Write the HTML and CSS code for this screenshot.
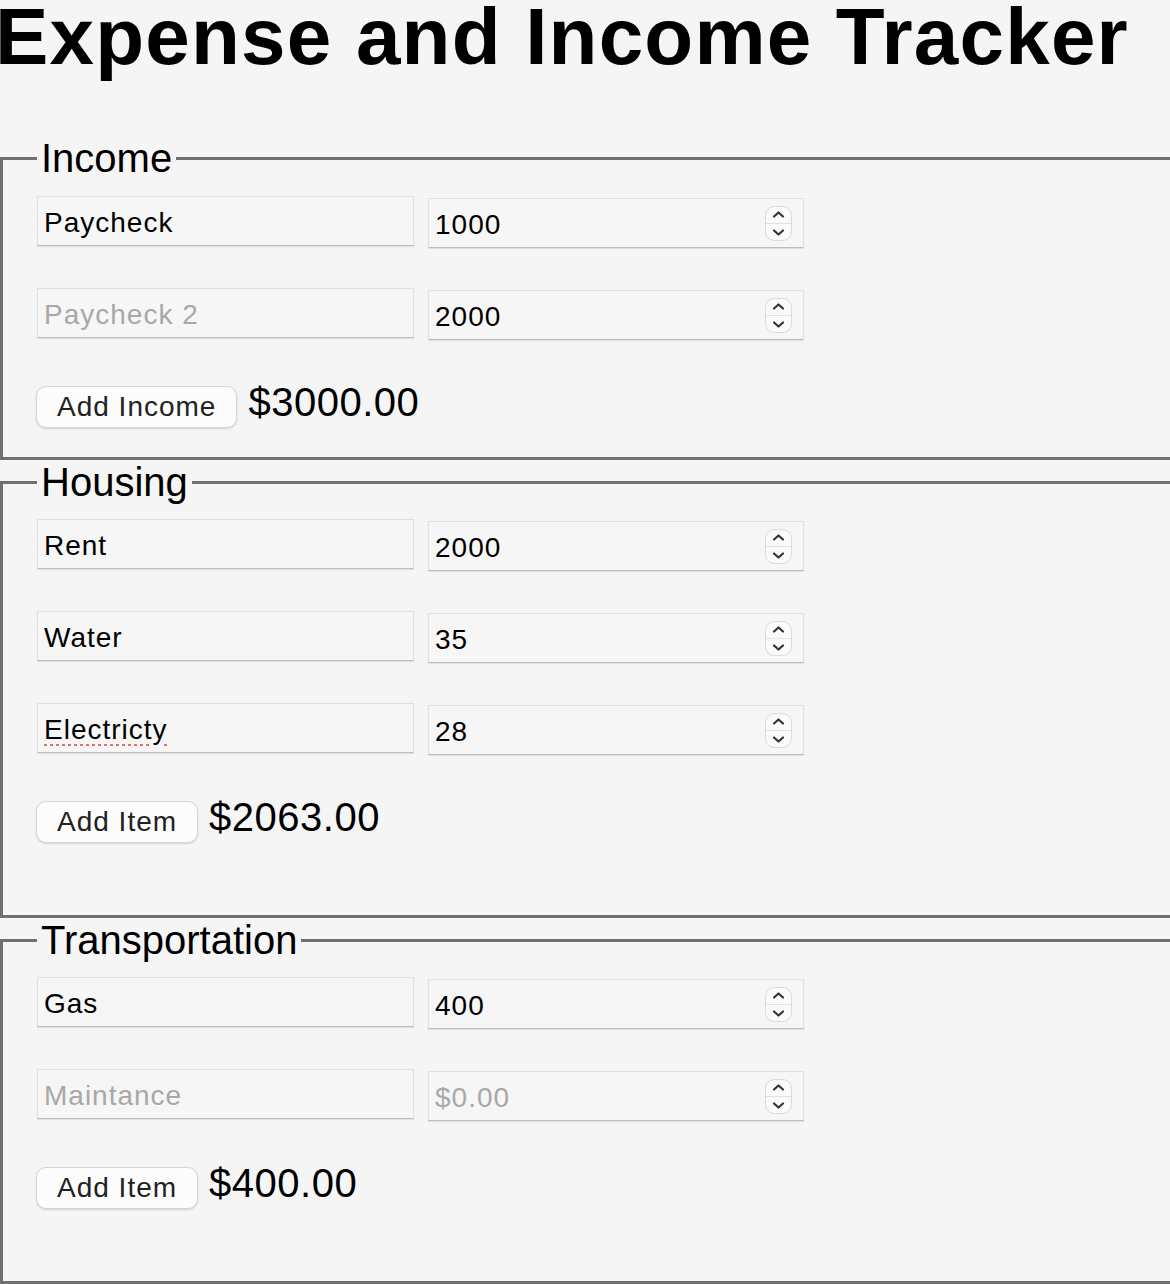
FILE: index.html
```html
<!DOCTYPE html>
<html lang="en">
<head>
    <meta charset="UTF-8">
    <title>Expense and Income Tracker</title>
    <link rel="stylesheet" href="styles.css">
</head>
<body>
    <h1>Expense and Income Tracker</h1>

    <fieldset class="section">
        <legend>Income</legend>
        <div class="row">
            <input type="text" class="name-input" value="Paycheck">
            <div class="num-field"><input type="text" class="num-input" value="1000"><svg class="spinner" width="27" height="35" viewBox="0 0 27 35"><rect x="0.5" y="0.5" width="26" height="34" rx="9" fill="#fafafa" stroke="#dadada"/><line x1="1" y1="17.5" x2="26" y2="17.5" stroke="#e2e2e2"/><path d="M9 10.5 L13.5 6.5 L18 10.5" fill="none" stroke="#333" stroke-width="2.2" stroke-linecap="round" stroke-linejoin="round"/><path d="M9 24.5 L13.5 28.5 L18 24.5" fill="none" stroke="#333" stroke-width="2.2" stroke-linecap="round" stroke-linejoin="round"/></svg></div>
        </div>
        <div class="row">
            <input type="text" class="name-input" placeholder="Paycheck 2">
            <div class="num-field"><input type="text" class="num-input" value="2000"><svg class="spinner" width="27" height="35" viewBox="0 0 27 35"><rect x="0.5" y="0.5" width="26" height="34" rx="9" fill="#fafafa" stroke="#dadada"/><line x1="1" y1="17.5" x2="26" y2="17.5" stroke="#e2e2e2"/><path d="M9 10.5 L13.5 6.5 L18 10.5" fill="none" stroke="#333" stroke-width="2.2" stroke-linecap="round" stroke-linejoin="round"/><path d="M9 24.5 L13.5 28.5 L18 24.5" fill="none" stroke="#333" stroke-width="2.2" stroke-linecap="round" stroke-linejoin="round"/></svg></div>
        </div>
        <div class="actions">
            <button class="add-btn">Add Income</button>
            <span class="total">$3000.00</span>
        </div>
    </fieldset>

    <fieldset class="section expense">
        <legend>Housing</legend>
        <div class="row">
            <input type="text" class="name-input" value="Rent">
            <div class="num-field"><input type="text" class="num-input" value="2000"><svg class="spinner" width="27" height="35" viewBox="0 0 27 35"><rect x="0.5" y="0.5" width="26" height="34" rx="9" fill="#fafafa" stroke="#dadada"/><line x1="1" y1="17.5" x2="26" y2="17.5" stroke="#e2e2e2"/><path d="M9 10.5 L13.5 6.5 L18 10.5" fill="none" stroke="#333" stroke-width="2.2" stroke-linecap="round" stroke-linejoin="round"/><path d="M9 24.5 L13.5 28.5 L18 24.5" fill="none" stroke="#333" stroke-width="2.2" stroke-linecap="round" stroke-linejoin="round"/></svg></div>
        </div>
        <div class="row">
            <input type="text" class="name-input" value="Water">
            <div class="num-field"><input type="text" class="num-input" value="35"><svg class="spinner" width="27" height="35" viewBox="0 0 27 35"><rect x="0.5" y="0.5" width="26" height="34" rx="9" fill="#fafafa" stroke="#dadada"/><line x1="1" y1="17.5" x2="26" y2="17.5" stroke="#e2e2e2"/><path d="M9 10.5 L13.5 6.5 L18 10.5" fill="none" stroke="#333" stroke-width="2.2" stroke-linecap="round" stroke-linejoin="round"/><path d="M9 24.5 L13.5 28.5 L18 24.5" fill="none" stroke="#333" stroke-width="2.2" stroke-linecap="round" stroke-linejoin="round"/></svg></div>
        </div>
        <div class="row">
            <input type="text" class="name-input misspelled" value="Electricty">
            <div class="num-field"><input type="text" class="num-input" value="28"><svg class="spinner" width="27" height="35" viewBox="0 0 27 35"><rect x="0.5" y="0.5" width="26" height="34" rx="9" fill="#fafafa" stroke="#dadada"/><line x1="1" y1="17.5" x2="26" y2="17.5" stroke="#e2e2e2"/><path d="M9 10.5 L13.5 6.5 L18 10.5" fill="none" stroke="#333" stroke-width="2.2" stroke-linecap="round" stroke-linejoin="round"/><path d="M9 24.5 L13.5 28.5 L18 24.5" fill="none" stroke="#333" stroke-width="2.2" stroke-linecap="round" stroke-linejoin="round"/></svg></div>
        </div>
        <div class="actions">
            <button class="add-btn">Add Item</button>
            <span class="total">$2063.00</span>
        </div>
    </fieldset>

    <fieldset class="section expense">
        <legend>Transportation</legend>
        <div class="row">
            <input type="text" class="name-input" value="Gas">
            <div class="num-field"><input type="text" class="num-input" value="400"><svg class="spinner" width="27" height="35" viewBox="0 0 27 35"><rect x="0.5" y="0.5" width="26" height="34" rx="9" fill="#fafafa" stroke="#dadada"/><line x1="1" y1="17.5" x2="26" y2="17.5" stroke="#e2e2e2"/><path d="M9 10.5 L13.5 6.5 L18 10.5" fill="none" stroke="#333" stroke-width="2.2" stroke-linecap="round" stroke-linejoin="round"/><path d="M9 24.5 L13.5 28.5 L18 24.5" fill="none" stroke="#333" stroke-width="2.2" stroke-linecap="round" stroke-linejoin="round"/></svg></div>
        </div>
        <div class="row">
            <input type="text" class="name-input" placeholder="Maintance">
            <div class="num-field"><input type="text" class="num-input" placeholder="$0.00"><svg class="spinner" width="27" height="35" viewBox="0 0 27 35"><rect x="0.5" y="0.5" width="26" height="34" rx="9" fill="#fafafa" stroke="#dadada"/><line x1="1" y1="17.5" x2="26" y2="17.5" stroke="#e2e2e2"/><path d="M9 10.5 L13.5 6.5 L18 10.5" fill="none" stroke="#333" stroke-width="2.2" stroke-linecap="round" stroke-linejoin="round"/><path d="M9 24.5 L13.5 28.5 L18 24.5" fill="none" stroke="#333" stroke-width="2.2" stroke-linecap="round" stroke-linejoin="round"/></svg></div>
        </div>
        <div class="actions">
            <button class="add-btn">Add Item</button>
            <span class="total">$400.00</span>
        </div>
    </fieldset>
</body>
</html>
```

FILE: styles.css
```css
html, body {
    overflow: hidden;
}
body {
    margin: 0;
    background-color: #f5f5f5;
    font-family: "Liberation Sans", Arial, sans-serif;
    color: #000;
}
h1 {
    font-size: 80px;
    font-weight: bold;
    letter-spacing: 1.2px;
    margin: -9px 0 53px -5px;
    white-space: nowrap;
}
.section {
    margin: 0 -20px 0 0;
    border: 3px solid #6f6f6f;
    padding: 15px 0 29px 34px;
}
.section.expense {
    padding-top: 14px;
    padding-bottom: 72px; /* ekstra luft under knappen */
}
.section legend {
    font-size: 40px;
    padding: 0 4px;
    margin-left: 0;
}
.row {
    display: flex;
    align-items: flex-start;
    margin-bottom: 40px;
}
input {
    font-family: "Liberation Sans", Arial, sans-serif;
    font-size: 28px;
    letter-spacing: 1px;
    color: #000;
    outline: none;
}
input::placeholder {
    color: #a8a8a8;
}
.name-input {
    width: 377px;
    height: 50px;
    box-sizing: border-box;
    margin: 0;
    padding: 4px 6px 0;
    background-color: #f6f6f6;
    border: 1px solid #e0e0e0;
    border-bottom-color: #bdbdbd;
    box-shadow: 0 1px 1px rgba(0, 0, 0, 0.08);
}
.misspelled {
    text-decoration: underline dotted #e06a6a;
    text-underline-offset: 5px;
}
.num-field {
    display: flex;
    align-items: center;
    width: 376px;
    height: 50px;
    box-sizing: border-box;
    margin: 2px 0 0 14px;
    background-color: #f6f6f6;
    border: 1px solid #e0e0e0;
    border-bottom-color: #bdbdbd;
    box-shadow: 0 1px 1px rgba(0, 0, 0, 0.08);
}
.num-input {
    flex: 1;
    min-width: 0;
    height: 100%;
    border: none;
    background: transparent;
    padding: 4px 6px 0;
}
.spinner {
    flex: none;
    margin-right: 11px;
}
.actions {
    display: flex;
    align-items: baseline;
}
.add-btn {
    font-family: "Liberation Sans", Arial, sans-serif;
    font-size: 28px;
    letter-spacing: 1px;
    color: #222;
    height: 42px;
    padding: 0 20px;
    margin-left: -1px;
    background-color: #fcfcfc;
    border: 1px solid #d6d6d6;
    border-radius: 10px;
    box-shadow: 0 1px 2px rgba(0, 0, 0, 0.15);
}
.total {
    font-size: 40px;
    letter-spacing: 0.5px;
    margin-left: 11px;
}
```
